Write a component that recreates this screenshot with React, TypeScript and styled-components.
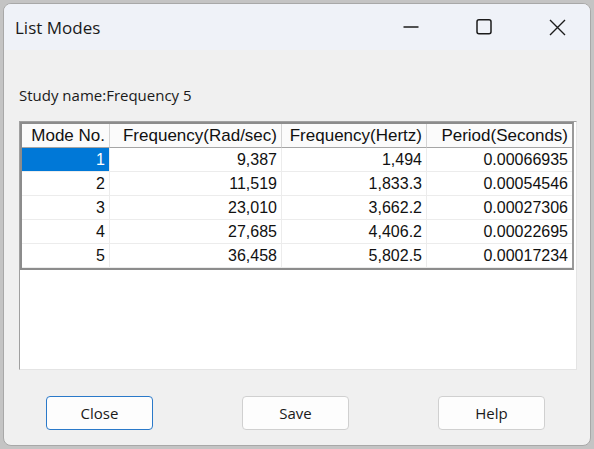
import styled, { createGlobalStyle } from "styled-components";

const GlobalStyle = createGlobalStyle`
	html, body {
		margin: 0;
		padding: 0;
		background: #c4c4c4;
	}
	* {
		box-sizing: border-box;
	}
`;

const columns = ["Mode No.", "Frequency(Rad/sec)", "Frequency(Hertz)", "Period(Seconds)"];
const modes = [
	["1", "9,387", "1,494", "0.00066935"],
	["2", "11,519", "1,833.3", "0.00054546"],
	["3", "23,010", "3,662.2", "0.00027306"],
	["4", "27,685", "4,406.2", "0.00022695"],
	["5", "36,458", "5,802.5", "0.00017234"],
];

const MinimizeIcon = () => (
	<svg width="16" height="16" viewBox="0 0 16 16">
		<path d="M0.5 8h15" stroke="#1b1b1b" strokeWidth="1.3" />
	</svg>
);

const MaximizeIcon = () => (
	<svg width="16" height="16" viewBox="0 0 16 16">
		<rect x="1" y="0.8" width="14" height="14" rx="2" fill="none" stroke="#1b1b1b" strokeWidth="1.5" />
	</svg>
);

const CloseIcon = () => (
	<svg width="17" height="17" viewBox="0 0 17 17">
		<path d="M1 1l15 15M16 1L1 16" stroke="#1b1b1b" strokeWidth="1.4" />
	</svg>
);

const App = () => {
	return (
		<>
			<GlobalStyle />
			<Window>
				<TitleBar>
					<Title>List Modes</Title>
					<Controls>
						<MinimizeIcon />
						<MaximizeIcon />
						<CloseIcon />
					</Controls>
				</TitleBar>
				<Body>
					<StudyLabel>Study name:Frequency 5</StudyLabel>
					<ListBox>
						<Grid>
							<Row>
								{columns.map((col) => (
									<HeaderCell key={col}>{col}</HeaderCell>
								))}
							</Row>
							{modes.map((row, r) => (
								<Row key={row[0]}>
									{row.map((value, c) => (
										<Cell key={c} $selected={r === 0 && c === 0}>
											{value}
										</Cell>
									))}
								</Row>
							))}
						</Grid>
					</ListBox>
					<ButtonRow>
						<Button $primary>Close</Button>
						<Button>Save</Button>
						<Button>Help</Button>
					</ButtonRow>
				</Body>
			</Window>
		</>
	);
};

const Window = styled.div`
	margin: 3px 0 0 3px;
	width: 588px;
	height: 443px;
	border: 1px solid #a8a8a8;
	border-radius: 8px;
	background: #f0f0f0;
	overflow: hidden;
	display: flex;
	flex-direction: column;
	font-family: "Segoe UI", "Open Sans", sans-serif;
	color: #1a1a1a;
`;

const TitleBar = styled.div`
	height: 46px;
	flex-shrink: 0;
	display: flex;
	align-items: center;
	padding: 0 24px 0 11px;
	background: #eff2f8;
`;

const Title = styled.div`
	flex: 1;
	font-size: 17px;
	color: #1a1a1a;
`;

const Controls = styled.div`
	display: flex;
	align-items: center;
	gap: 57px;

	svg {
		display: block;
	}
`;

const Body = styled.div`
	flex: 1;
	display: flex;
	flex-direction: column;
	padding: 35px 13px 0 15px;
`;

const StudyLabel = styled.div`
	font-size: 15px;
	line-height: 20px;
`;

const ListBox = styled.div`
	margin-top: 16px;
	height: 249px;
	background: #fff;
	border: 1px solid;
	border-color: #a0a0a0 #e4e4e4 #e4e4e4 #a0a0a0;
`;

const Grid = styled.div`
	width: 554px;
	border: 2px solid #8c8c8c;
	border-right-color: #9a9a9a;
	font-family: "Liberation Sans", Arial, sans-serif;
	font-size: 16px;
	color: #111;
`;

const Row = styled.div`
	display: grid;
	grid-template-columns: 88px 172px 145px 1fr;
	height: 24px;
`;

const HeaderCell = styled.div`
	display: flex;
	align-items: center;
	justify-content: flex-end;
	padding-right: 4px;
	font-size: 17px;
	background: #fbfbfb;
	border-right: 1px solid #d4d4d4;
	border-bottom: 1px solid #a5a5a5;

	&:last-child {
		border-right: none;
	}
`;

const Cell = styled.div<{ $selected?: boolean }>`
	display: flex;
	align-items: center;
	justify-content: flex-end;
	padding-right: 4px;
	background: ${(p) => (p.$selected ? "#0078d7" : "#fff")};
	color: ${(p) => (p.$selected ? "#fff" : "#111")};
	border-right: 1px solid #ececec;
	border-bottom: 1px solid #ececec;

	&:last-child {
		border-right: none;
	}
`;

const ButtonRow = styled.div`
	display: flex;
	gap: 89px;
	margin-top: 26px;
	padding-left: 27px;
`;

const Button = styled.button<{ $primary?: boolean }>`
	width: 107px;
	height: 34px;
	font-family: "Segoe UI", "Open Sans", sans-serif;
	font-size: 15px;
	color: #1a1a1a;
	background: #fdfdfd;
	border: ${(p) => (p.$primary ? "1.5px solid #2a79c9" : "1px solid #d0d0d0")};
	border-radius: 4px;
	padding: 0;
`;

export default App;
